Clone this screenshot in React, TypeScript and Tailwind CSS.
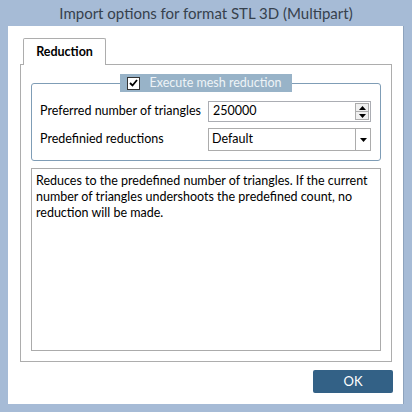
import { useState } from 'react';

const font = { fontFamily: 'Lato, "Open Sans", sans-serif' };

const Label = ({ children }: { children: string }) => (
  <span className="w-[168px] shrink-0 text-[12.5px] text-black">{children}</span>
);

const SpinInput = ({ value }: { value: string }) => (
  <div className="flex h-[21px] w-[163px] items-stretch border border-[#abadb3] bg-white">
    <span className="flex flex-1 items-center pl-[4px] text-[12.5px] text-black">{value}</span>
    <div className="my-[1px] mr-[1px] flex w-[14px] flex-col border border-[#acacac] bg-[#f0f0f0]">
      <div className="flex flex-1 items-center justify-center border-b border-[#acacac]">
        <svg width="7" height="4" viewBox="0 0 7 4"><path d="M0 4 L3.5 0 L7 4 Z" fill="#000" /></svg>
      </div>
      <div className="flex flex-1 items-center justify-center">
        <svg width="7" height="4" viewBox="0 0 7 4"><path d="M0 0 L3.5 4 L7 0 Z" fill="#000" /></svg>
      </div>
    </div>
  </div>
);

const Select = ({ value }: { value: string }) => (
  <div className="flex h-[23px] w-[163px] items-stretch border border-[#acacac] bg-white">
    <span className="flex flex-1 items-center pl-[3px] text-[12.5px] text-black">{value}</span>
    <div className="flex w-[15px] items-center justify-center border-l border-[#acacac]">
      <svg width="7" height="4" viewBox="0 0 7 4"><path d="M0 0 L3.5 4 L7 0 Z" fill="#000" /></svg>
    </div>
  </div>
);

export default function App() {
  const [reduce, setReduce] = useState(true);

  return (
    <div className="flex h-[412px] w-[412px] flex-col bg-[#a6bbd6]" style={font}>
      <div className="flex h-[26px] items-center justify-center text-[15px] text-[#36414d]">
        Import options for format STL 3D (Multipart)
      </div>

      <div className="mx-[8px] mb-[8px] flex flex-1 flex-col border-r border-[#8ea3bd] bg-white pl-[12px] pr-[10px] pt-[12px]">
        <div className="relative z-10 -mb-px ml-[3px] flex h-[27px] w-[83px] items-center justify-center rounded-t-[2px] border border-b-0 border-[#adadad] bg-white text-[12.5px] font-bold text-black">
          Reduction
        </div>

        <div className="flex h-[298px] w-[372px] flex-col border border-[#adadad] px-[10px] pt-[9px]">
          <fieldset className="rounded-[3px] border border-[#7f9db6] px-[8px] pb-[9px] pt-[9px]">
            <legend className="mx-auto flex h-[18px] items-center gap-[9px] bg-[#98b3c8] px-[7px]">
              <button
                type="button"
                onClick={() => setReduce(!reduce)}
                className="flex h-[13px] w-[13px] items-center justify-center border border-[#333] bg-white"
              >
                {reduce && (
                  <svg width="9" height="8" viewBox="0 0 9 8">
                    <path d="M1 4 L3.5 6.5 L8 1" stroke="#000" strokeWidth="1.8" fill="none" />
                  </svg>
                )}
              </button>
              <span className="pr-[3px] text-[12.5px] text-[#eef3f7]">Execute mesh reduction</span>
            </legend>
            <div className="flex flex-col gap-[6px]">
              <div className="flex items-center">
                <Label>Preferred number of triangles</Label>
                <SpinInput value="250000" />
              </div>
              <div className="flex items-center">
                <Label>Predefinied reductions</Label>
                <Select value="Default" />
              </div>
            </div>
          </fieldset>

          <div className="mt-[7px] h-[183px] border border-[#ababab] px-[4px] pt-[4px] text-[12.5px] leading-[16px] text-black">
            Reduces to the predefined number of triangles. If the current number of triangles undershoots the predefined count, no reduction will be made.
          </div>
        </div>

        <div className="mt-[8px] flex justify-end">
          <button
            type="button"
            className="flex h-[23px] w-[80px] items-center justify-center rounded-[2px] bg-[#336186] text-[13px] text-white"
          >
            OK
          </button>
        </div>
      </div>
    </div>
  );
}
